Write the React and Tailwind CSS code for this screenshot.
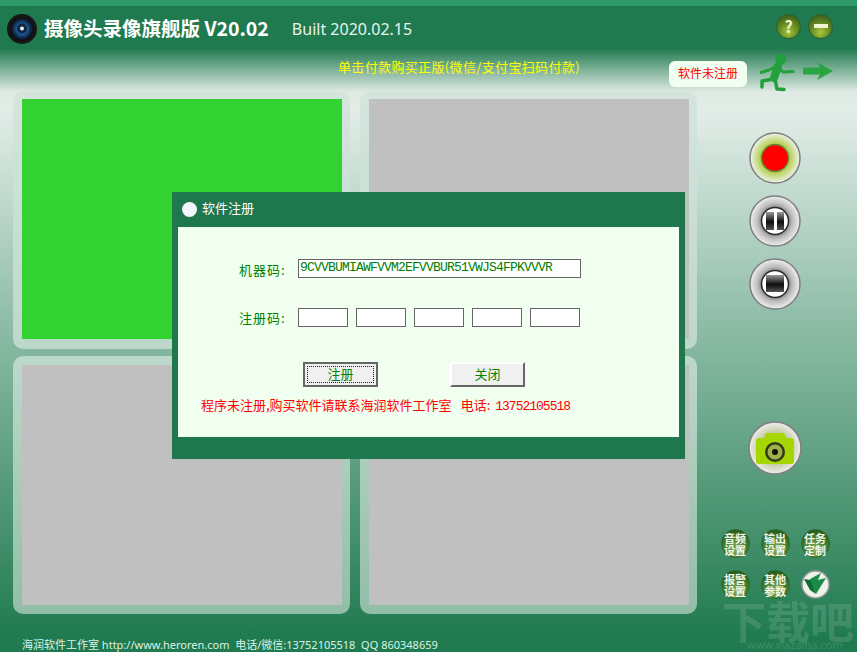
function Lens() {
  return (
    <svg width="30" height="30" viewBox="0 0 30 30" className="shrink-0">
      <defs>
        <radialGradient id="lensBlue" cx="50%" cy="50%" r="50%">
          <stop offset="0%" stopColor="#0b1a33" />
          <stop offset="45%" stopColor="#1d5b9c" />
          <stop offset="75%" stopColor="#10263f" />
          <stop offset="100%" stopColor="#0a0a0a" />
        </radialGradient>
      </defs>
      <circle cx="15" cy="15" r="15" fill="#161616" />
      <circle cx="15" cy="15" r="12" fill="url(#lensBlue)" />
      <circle cx="15" cy="14.5" r="5" fill="#12263f" />
      <circle cx="15" cy="14.5" r="2" fill="#e8f4f4" />
    </svg>
  );
}

function RunningMan() {
  return (
    <svg width="36" height="38" viewBox="0 0 36 38" className="shrink-0">
      <g fill="none" stroke="#22a03c" strokeLinecap="round" strokeLinejoin="round">
        <path d="M17 12 L9 16 L1 18.5" strokeWidth="3" />
        <path d="M18 13 L23 18 L33 17.5" strokeWidth="3" />
        <path d="M18 12 L14 24" strokeWidth="8" />
        <path d="M13 25 L2 27 L2 33" strokeWidth="3.5" />
        <path d="M15 25 L17 35 L24 35.5" strokeWidth="3.5" />
      </g>
      <circle cx="21" cy="5" r="5.5" fill="#22a03c" />
    </svg>
  );
}

function Arrow() {
  return (
    <svg width="30" height="18" viewBox="0 0 30 18" className="shrink-0">
      <polygon points="0,5.5 17,5.5 14,0 30,9 14,18 17,12.5 0,12.5" fill="#2ba443" />
    </svg>
  );
}

function Ring({ children, id }) {
  return (
    <svg width="52" height="52" viewBox="0 0 52 52" className="shrink-0">
      <defs>
        <radialGradient id={id} cx="50%" cy="50%" r="50%">
          <stop offset="45%" stopColor="#6f6f6f" />
          <stop offset="70%" stopColor="#bdbdbd" />
          <stop offset="100%" stopColor="#f0f0f0" />
        </radialGradient>
        <linearGradient id={`${id}Bar`} x1="0" y1="0" x2="0" y2="1">
          <stop offset="0%" stopColor="#9a9a9a" />
          <stop offset="55%" stopColor="#0c0c0c" />
          <stop offset="100%" stopColor="#555555" />
        </linearGradient>
      </defs>
      <circle cx="26" cy="26" r="25" fill={`url(#${id})`} stroke="#7f7f7f" strokeWidth="1.5" />
      <circle cx="26" cy="26" r="13.5" fill="#ffffff" stroke="#2a2a2a" strokeWidth="1.5" />
      {children(`url(#${id}Bar)`)}
    </svg>
  );
}

function RecordButton() {
  return (
    <svg width="52" height="52" viewBox="0 0 52 52" className="shrink-0">
      <defs>
        <radialGradient id="recHalo" cx="50%" cy="50%" r="50%">
          <stop offset="50%" stopColor="#a9c832" />
          <stop offset="100%" stopColor="#eef2ea" />
        </radialGradient>
      </defs>
      <circle cx="26" cy="26" r="25" fill="url(#recHalo)" stroke="#7f7f7f" strokeWidth="1.5" />
      <circle cx="26" cy="26" r="13.5" fill="#ff0000" stroke="#66863a" strokeWidth="1.5" />
    </svg>
  );
}

function PauseButton() {
  return (
    <Ring id="pauseRing">
      {(fill) => (
        <>
          <rect x="17" y="17" width="8" height="18" fill={fill} />
          <rect x="28" y="17" width="7" height="18" fill={fill} />
        </>
      )}
    </Ring>
  );
}

function StopButton() {
  return (
    <Ring id="stopRing">
      {(fill) => <rect x="17" y="17" width="18" height="17" fill={fill} />}
    </Ring>
  );
}

function CameraButton() {
  return (
    <svg width="54" height="54" viewBox="0 0 54 54" className="shrink-0">
      <defs>
        <radialGradient id="camBg" cx="50%" cy="50%" r="50%">
          <stop offset="60%" stopColor="#c3cba2" />
          <stop offset="100%" stopColor="#eeeeee" />
        </radialGradient>
      </defs>
      <circle cx="27" cy="27" r="26" fill="url(#camBg)" stroke="#808080" strokeWidth="1.5" />
      <path d="M8 20 Q8 17 11 17 L16 17 L18 12 L36 12 L38 17 L43 17 Q46 17 46 20 L46 40 Q46 43 43 43 L11 43 Q8 43 8 40 Z" fill="#a6d600" />
      <circle cx="27" cy="31" r="10" fill="#2f3b18" />
      <circle cx="27" cy="31" r="7.5" fill="#9fb24a" />
      <circle cx="27" cy="31" r="3" fill="#111" />
    </svg>
  );
}

function CheckLogo() {
  return (
    <svg width="29" height="29" viewBox="0 0 29 29" className="shrink-0">
      <circle cx="14.5" cy="14.5" r="13.5" fill="#eef3ea" stroke="#9a9a9a" strokeWidth="1.5" />
      <polygon points="3,9 10,10 15,24 9,20" fill="#0f6c36" />
      <polygon points="9,9 20,3 17,10 25,8 15,24" fill="#1b8c48" />
    </svg>
  );
}

function RoundButton({ top, bottom }) {
  return (
    <div className="w-[29px] h-[29px] rounded-full flex flex-col items-center justify-center border border-[#2f6a2a] bg-[radial-gradient(circle_at_50%_70%,#86ad5c_0%,#3d7a2c_55%,#123f12_100%)] text-[#f2f6e8] text-[11px] leading-[12px] font-bold">
      <span>{top}</span>
      <span>{bottom}</span>
    </div>
  );
}

function App() {
  const codeBoxes = [1, 2, 3, 4, 5];

  return (
    <div className="relative w-[857px] h-[652px] overflow-hidden flex flex-col [font-family:'Noto_Sans_CJK_SC',sans-serif] bg-[linear-gradient(180deg,#1f7a4f_0px,#1f7a4f_48px,#dfeae4_92px,#e2ede8_112px,#8fbda8_320px,#1f7a4f_640px)]">
      {/* header */}
      <div className="h-[91px] shrink-0">
        <div className="h-[6px] bg-[#2e9a6c]"></div>
        <div className="flex items-center h-[46px] pl-[7px] pr-[24px]">
          <Lens />
          <span className="ml-[7px] mb-[3px] text-[19.5px] font-bold text-white whitespace-nowrap">
            摄像头录像旗舰版 V20.02
          </span>
          <span className="ml-[23px] text-[16px] text-[#e8f5ee] whitespace-nowrap [font-family:'Noto_Sans',sans-serif]">
            Built 2020.02.15
          </span>
          <div className="ml-auto flex gap-[7px] mb-[6px]">
            <div className="w-[25px] h-[25px] rounded-full flex items-center justify-center text-[16px] font-bold text-[#f4f4c8] border border-[#2d5f2d] bg-[radial-gradient(circle_at_50%_75%,#a9c83c_0%,#5e8420_50%,#2f4f18_100%)]">
              ?
            </div>
            <div className="w-[25px] h-[25px] rounded-full flex items-center justify-center border border-[#2d5f2d] bg-[radial-gradient(circle_at_50%_75%,#a9c83c_0%,#5e8420_50%,#2f4f18_100%)]">
              <div className="w-[14px] h-[4px] bg-[#f0f4d0]"></div>
            </div>
          </div>
        </div>
        <div className="flex items-start">
          <span className="ml-[338px] mt-[6px] w-[331px] text-[13px] leading-[18px] tracking-[0.35px] text-[#ffff00] whitespace-nowrap">
            单击付款购买正版(微信/支付宝扫码付款)
          </span>
          <div className="mt-[9px] w-[78px] h-[26px] pb-[2px] rounded-[6px] bg-[#f0fff0] flex items-center justify-center text-[12px] text-[#ff0000] whitespace-nowrap">
            软件未注册
          </div>
          <div className="ml-[13px] mt-[2px]">
            <RunningMan />
          </div>
          <div className="ml-[7px] mt-[10px]">
            <Arrow />
          </div>
        </div>
      </div>

      {/* panels and side buttons */}
      <div className="flex h-[523px] shrink-0">
        <div className="ml-[13px] grid grid-cols-[337px_337px] gap-x-[10px] gap-y-[7px] content-start">
          <div className="h-[258px] pl-[9px] pr-[8px] pt-[8px] rounded-[10px] bg-[linear-gradient(180deg,#d5e5de,#bcd8ca)]">
            <div className="h-[240px] bg-[#32d232]"></div>
          </div>
          <div className="h-[258px] pl-[9px] pr-[8px] pt-[8px] rounded-[10px] bg-[linear-gradient(180deg,#d5e5de,#bcd8ca)]">
            <div className="h-[240px] bg-[#c0c0c0]"></div>
          </div>
          <div className="h-[258px] pl-[9px] pr-[8px] pt-[9px] rounded-[10px] bg-[linear-gradient(180deg,#bcd8ca,#92bea8)]">
            <div className="h-[240px] bg-[#c0c0c0]"></div>
          </div>
          <div className="h-[258px] pl-[9px] pr-[8px] pt-[9px] rounded-[10px] bg-[linear-gradient(180deg,#bcd8ca,#92bea8)]">
            <div className="h-[240px] bg-[#c0c0c0]"></div>
          </div>
        </div>

        <div className="w-[156px] flex flex-col items-center pt-[41px]">
          <RecordButton />
          <div className="mt-[11px]">
            <PauseButton />
          </div>
          <div className="mt-[11px]">
            <StopButton />
          </div>
          <div className="mt-[111px]">
            <CameraButton />
          </div>
          <div className="mt-[54px] grid grid-cols-3 gap-x-[11px] gap-y-[12px]">
            <RoundButton top="音频" bottom="设置" />
            <RoundButton top="输出" bottom="设置" />
            <RoundButton top="任务" bottom="定制" />
            <RoundButton top="报警" bottom="设置" />
            <RoundButton top="其他" bottom="参数" />
            <CheckLogo />
          </div>
        </div>
      </div>

      {/* footer */}
      <div className="pl-[22px] pt-[23px] text-[11px] leading-[16px] text-[#dcf2e6] whitespace-nowrap [font-family:'Noto_Sans','Noto_Sans_CJK_SC',sans-serif]">
        海润软件工作室 http://www.heroren.com&nbsp; 电话/微信:13752105518&nbsp; QQ 860348659
      </div>

      {/* watermark */}
      <div className="absolute left-[722px] top-[594px] text-[44px] leading-[52px] font-bold text-white/15 whitespace-nowrap">
        下载吧
      </div>
      <div className="absolute left-[747px] top-[639px] text-[11px] leading-[12px] text-white/15 whitespace-nowrap [font-family:'Noto_Sans',sans-serif]">
        www.xiazaiba.com
      </div>

      {/* register dialog */}
      <div className="absolute left-[172px] top-[192px] w-[513px] h-[267px] bg-[#1f774d] flex flex-col">
        <div className="h-[35px] shrink-0 flex items-center pl-[10px] gap-[5px]">
          <div className="w-[15px] h-[15px] rounded-full bg-[#f2f5fb]"></div>
          <span className="text-[13px] pb-[4px] text-white">软件注册</span>
        </div>
        <div className="mx-[6px] h-[210px] bg-[#f0fff0] flex flex-col text-[#008000] text-[13px]">
          <div className="flex items-center mt-[32px] h-[19px]">
            <span className="ml-[61px] w-[59px] tracking-[1px] pt-[2px]">机器码:</span>
            <div className="w-[283px] h-[19px] bg-white border-[1.5px] border-[#666666] pl-[1px] text-[13px] leading-[15px] tracking-[-0.8px] whitespace-nowrap [font-family:'Liberation_Mono',monospace]">
              9CVVBUMIAWFVVM2EFVVBUR51VWJS4FPKVVVR
            </div>
          </div>
          <div className="flex items-center mt-[30px] h-[19px]">
            <span className="ml-[61px] w-[59px] tracking-[1px]">注册码:</span>
            <div className="flex gap-[8px]">
              {codeBoxes.map((n) => (
                <div key={n} className="w-[50px] h-[19px] bg-white border-[1.5px] border-[#666666]"></div>
              ))}
            </div>
          </div>
          <div className="flex mt-[35px] ml-[125px] gap-[72px]">
            <div className="w-[75px] h-[25px] border-2 border-[#666666] bg-[#f0f0f0] p-[2px]">
              <div className="h-full pb-[2px] border border-dotted border-[#4b0060] flex items-center justify-center">
                注册
              </div>
            </div>
            <div className="w-[75px] h-[25px] pb-[2px] bg-[#f0f0f0] border-2 border-t-white border-l-white border-r-[#666666] border-b-[#666666] flex items-center justify-center">
              关闭
            </div>
          </div>
          <div className="ml-[23px] mt-[9px] text-[#ff0000] leading-[18px] whitespace-nowrap">
            程序未注册,购买软件请联系海润软件工作室<span className="ml-[9px]">电话:</span>
            <span className="ml-[5px] text-[13px] tracking-[-1px] [font-family:'Liberation_Mono',monospace]">13752105518</span>
          </div>
        </div>
      </div>
    </div>
  );
}

export default App;
